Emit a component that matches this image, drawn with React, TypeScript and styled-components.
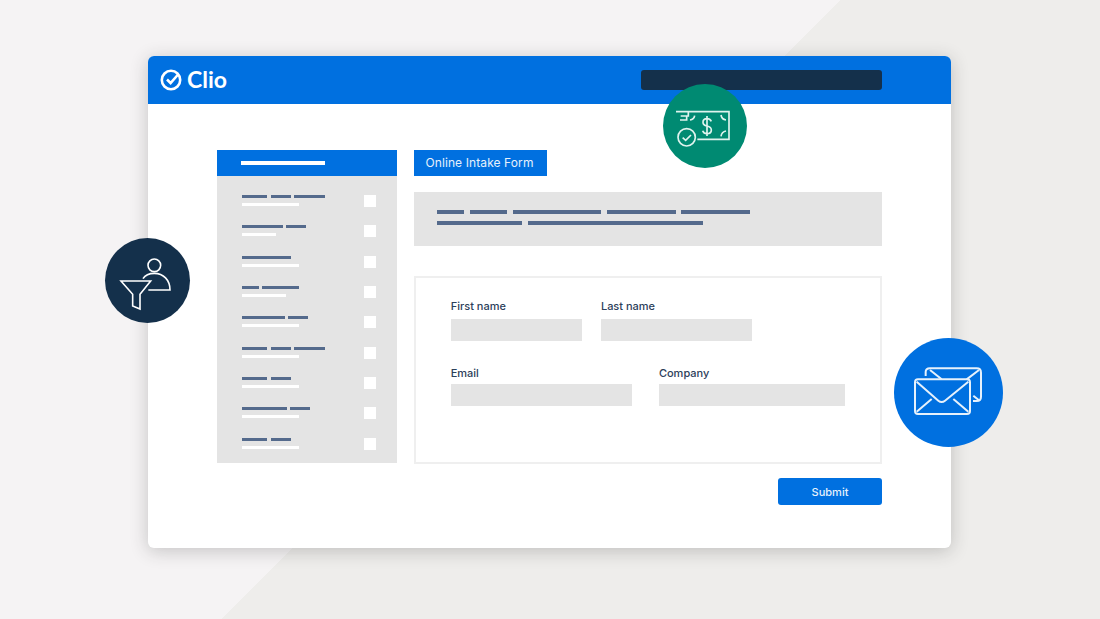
import React from 'react';
import styled, { createGlobalStyle } from 'styled-components';

const GlobalStyle = createGlobalStyle`
  html, body {
    margin: 0;
    padding: 0;
  }
  body {
    font-family: Inter, "Liberation Sans", sans-serif;
  }
`;

const Stage = styled.div`
  width: 1100px;
  height: 619px;
  overflow: hidden;
  box-sizing: border-box;
  padding: 56px 149px 0 148px;
  background: linear-gradient(135deg, #f5f3f4 594px, #eeedeb 594px);
`;

const Window = styled.div`
  position: relative;
  height: 492px;
  border-radius: 6px;
  background: #fff;
  box-shadow: 0 3px 18px rgba(40, 40, 40, 0.24);
`;

const Header = styled.header`
  height: 48px;
  box-sizing: border-box;
  padding: 0 69px 0 12px;
  border-radius: 6px 6px 0 0;
  background: #0070e0;
  display: flex;
  align-items: center;
  justify-content: space-between;
`;

const Logo = styled.div`
  display: flex;
  align-items: center;
  gap: 4px;
  margin-top: -2px;
  color: #fff;
  font-family: Lato, "Liberation Sans", sans-serif;
  font-size: 23px;
  font-weight: 700;
`;

const SearchBar = styled.div`
  width: 241px;
  height: 20.5px;
  border-radius: 3px;
  background: #14304b;
`;

const Body = styled.div`
  padding: 46px 69px 0;
  display: grid;
  grid-template-columns: 180px 468px;
  gap: 17px;
`;

const Sidebar = styled.aside`
  height: 313px;
  background: #e4e4e4;
`;

const SidebarHead = styled.div`
  height: 26px;
  padding-left: 24px;
  background: #0070e0;
  display: flex;
  align-items: center;
`;

const SidebarTitle = styled.div`
  width: 84px;
  height: 4px;
  background: #fff;
`;

const SidebarList = styled.ul`
  list-style: none;
  margin: 0;
  padding: 19px 21px 0 24.5px;
  display: flex;
  flex-direction: column;
  gap: 18.35px;
`;

const SidebarRow = styled.li`
  height: 12px;
  display: flex;
  justify-content: space-between;
`;

const BarLine = styled.div`
  display: flex;
  gap: 3.5px;
`;

const Bar = styled.div<{ $w: number }>`
  width: ${p => p.$w}px;
  height: 3px;
  background: #546a8c;
`;

const SubBar = styled.div<{ $w: number }>`
  width: ${p => p.$w}px;
  height: 3px;
  margin-top: 5px;
  background: #fff;
`;

const Tick = styled.div`
  width: 12px;
  height: 12px;
  background: #fff;
`;

const Main = styled.main`
  display: flex;
  flex-direction: column;
`;

const Tab = styled.div`
  align-self: flex-start;
  box-sizing: border-box;
  width: 133px;
  height: 26px;
  padding: 0 2px 1px 0;
  background: #0070e0;
  color: #e6f1fc;
  font-size: 12px;
  font-weight: 400;
  letter-spacing: 0.1px;
  display: flex;
  align-items: center;
  justify-content: center;
`;

const Intro = styled.div`
  height: 54px;
  box-sizing: border-box;
  margin-top: 16px;
  padding: 18px 0 0 23px;
  background: #e4e4e4;
  display: flex;
  flex-direction: column;
  gap: 6.5px;
`;

const IntroLine = styled.div`
  display: flex;
  gap: 5.5px;
`;

const IntroBar = styled.div<{ $w: number }>`
  width: ${p => p.$w}px;
  height: 4px;
  background: #546a8c;
`;

const FormBox = styled.form`
  height: 188px;
  box-sizing: border-box;
  margin-top: 30px;
  padding: 21px 35px 0;
  border: 2px solid #efefef;
  display: flex;
  flex-direction: column;
  gap: 25px;
`;

const FormRow = styled.div<{ $gap: number }>`
  display: flex;
  gap: ${p => p.$gap}px;
`;

const Field = styled.label<{ $gap: number }>`
  display: flex;
  flex-direction: column;
  gap: ${p => p.$gap}px;
  margin-left: -0.3px;
  color: #2c405a;
  font-size: 11px;
  font-weight: 500;
  line-height: 15px;
`;

const FieldInput = styled.div<{ $w: number }>`
  width: ${p => p.$w}px;
  height: 22px;
  background: #e4e4e4;
`;

const Actions = styled.div`
  margin-top: 14px;
  display: flex;
  justify-content: flex-end;
`;

const Submit = styled.button`
  width: 104px;
  height: 27px;
  border: 0;
  border-radius: 3px;
  background: #0070e0;
  color: #e6f1fc;
  font-family: inherit;
  font-size: 11px;
  font-weight: 500;
`;

const Badge = styled.div<{ $size: number; $bg: string; $x: number; $y: number }>`
  position: absolute;
  left: ${p => p.$x}px;
  top: ${p => p.$y}px;
  width: ${p => p.$size}px;
  height: ${p => p.$size}px;
  border-radius: 50%;
  background: ${p => p.$bg};
  svg {
    display: block;
  }
`;

const sideRows = [
  { bars: [25.5, 20, 30.5], sub: 57 },
  { bars: [41, 20], sub: 34 },
  { bars: [49], sub: 57 },
  { bars: [17, 36.5], sub: 44 },
  { bars: [43, 20], sub: 57 },
  { bars: [25.5, 20, 30.5], sub: 57 },
  { bars: [25.5, 20], sub: 57 },
  { bars: [45, 20], sub: 57 },
  { bars: [25.5, 20], sub: 57 },
];

const introLines = [
  [27, 37.5, 88.5, 69, 68.5],
  [85, 175],
];

const ClioMark = () => (
  <svg width="23" height="23" viewBox="0 0 23 23" fill="none" stroke="#fff">
    <circle cx="11" cy="12" r="9.2" strokeWidth="2.6" />
    <path d="M7 11.5 L10.6 15 L18.5 6" strokeWidth="2.6" />
  </svg>
);

// all three badge icons are drawn in the coordinates of the zoomed crop
const MoneyIcon = () => (
  <svg width="84" height="84" viewBox="69 72 252 252" fill="none" stroke="#dff3ee" strokeWidth="5">
    <path d="M108 155 H267 V238 H172" />
    <path d="M122 168 H145 V155 M120 180 H140 V168" />
    <path d="M150 180 Q162 178 164 167 M243 165 Q245 178 258 180 M243 229 Q245 215 258 213" />
    <circle cx="140" cy="232" r="26" />
    <path d="M128 233 L137 241 L153 225" />
    <path d="M214 184 Q210 176 201 176 Q189 176 189 187 Q189 196 201 198 Q214 201 214 210 Q214 221 201 221 Q191 221 188 212 M201 168 V228" />
  </svg>
);

const FunnelIcon = () => (
  <svg width="85" height="85" viewBox="30 24 255 255" fill="none" stroke="#fff" strokeWidth="4.8">
    <circle cx="178" cy="106" r="19" />
    <path d="M144 146 C150 136 165 130 178 130 C205 130 225 150 225 180 H160" />
    <path d="M78 153 H167 L135 193 V237 L113 228 V193 Z" />
  </svg>
);

const MailIcon = () => (
  <svg width="109" height="109" viewBox="27 24 327 327" fill="none" stroke="#e6f1fc" strokeWidth="6">
    <rect x="90" y="148" width="165" height="104" rx="9" />
    <path d="M95 155 L160 212 Q170 220 180 212 L250 155" />
    <path d="M95 245 L140 207 M250 245 L205 207" />
    <path d="M122 138 V126 Q122 115 135 115 H275 Q288 115 288 128 V200 Q288 213 275 213 H264" />
    <path d="M135 120 L170 148 M282 120 L245 148 M265 197 L282 211" />
  </svg>
);

export default function App() {
  return (
    <Stage>
      <GlobalStyle />
      <Window>
        <Header>
          <Logo>
            <ClioMark />
            Clio
          </Logo>
          <SearchBar />
        </Header>
        <Body>
          <Sidebar>
            <SidebarHead>
              <SidebarTitle />
            </SidebarHead>
            <SidebarList>
              {sideRows.map((row, i) => (
                <SidebarRow key={i}>
                  <div>
                    <BarLine>
                      {row.bars.map((w, j) => (
                        <Bar key={j} $w={w} />
                      ))}
                    </BarLine>
                    <SubBar $w={row.sub} />
                  </div>
                  <Tick />
                </SidebarRow>
              ))}
            </SidebarList>
          </Sidebar>
          <Main>
            <Tab>Online Intake Form</Tab>
            <Intro>
              {introLines.map((line, i) => (
                <IntroLine key={i}>
                  {line.map((w, j) => (
                    <IntroBar key={j} $w={w} />
                  ))}
                </IntroLine>
              ))}
            </Intro>
            <FormBox>
              <FormRow $gap={19.5}>
                <Field $gap={5}>
                  First name
                  <FieldInput $w={131} />
                </Field>
                <Field $gap={5}>
                  Last name
                  <FieldInput $w={151.5} />
                </Field>
              </FormRow>
              <FormRow $gap={27.5}>
                <Field $gap={3}>
                  Email
                  <FieldInput $w={181} />
                </Field>
                <Field $gap={3}>
                  Company
                  <FieldInput $w={186} />
                </Field>
              </FormRow>
            </FormBox>
            <Actions>
              <Submit type="button">Submit</Submit>
            </Actions>
          </Main>
        </Body>
        <Badge $size={84} $bg="#008a72" $x={515} $y={28}>
          <MoneyIcon />
        </Badge>
        <Badge $size={85} $bg="#14304b" $x={-43} $y={182}>
          <FunnelIcon />
        </Badge>
        <Badge $size={109} $bg="#0070e0" $x={746} $y={282}>
          <MailIcon />
        </Badge>
      </Window>
    </Stage>
  );
}
